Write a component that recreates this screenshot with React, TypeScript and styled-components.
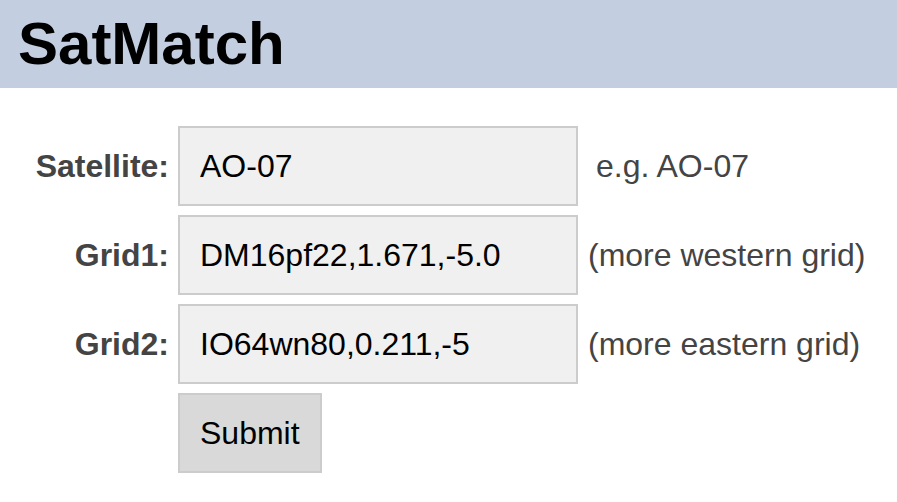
import React, {useState} from "react"
import styled, {createGlobalStyle} from "styled-components"

const GlobalStyle = createGlobalStyle`
  body {
    margin: 0;
    background: #fff;
    font-family: "Liberation Sans", Arial, sans-serif;
  }
`;

const Header = styled.header`
  height: 88px;
  background: #c3cfe0;
  display: flex;
  align-items: center;
  padding-left: 18px;

  h1 {
    margin: 0;
    font-size: 60px;
    font-weight: bold;
    color: #000;
    line-height: 1;
  }
`;

const Form = styled.form`
  display: grid;
  grid-template-columns: 169px 400px auto;
  grid-auto-rows: 80px;
  column-gap: 9px;
  row-gap: 9px;
  padding-top: 38px;
`;

const Label = styled.label`
  justify-self: end;
  align-self: center;
  font-size: 32px;
  font-weight: bold;
  color: #444;
`;

const Field = styled.input`
  box-sizing: border-box;
  width: 400px;
  height: 80px;
  padding: 0 20px;
  border: 2px solid #ccc;
  background: #f0f0f0;
  font-family: "Liberation Sans", Arial, sans-serif;
  font-size: 32px;
  color: #000;
  outline: none;
`;

const Hint = styled.span<{indent?: boolean}>`
  align-self: center;
  font-size: 32px;
  color: #444;
  white-space: nowrap;
  padding-left: ${(props) => (props.indent ? "9px" : "1px")};
`;

const SubmitButton = styled.button`
  grid-column: 2;
  justify-self: start;
  box-sizing: border-box;
  height: 80px;
  padding: 0 20px;
  border: 2px solid #ccc;
  background: #d9d9d9;
  font-family: "Liberation Sans", Arial, sans-serif;
  font-size: 32px;
  color: #000;
`;

const rows = [
  {name: "sat", label: "Satellite:", value: "AO-07", hint: "e.g. AO-07", indent: true},
  {name: "grid1", label: "Grid1:", value: "DM16pf22,1.671,-5.0", hint: "(more western grid)"},
  {name: "grid2", label: "Grid2:", value: "IO64wn80,0.211,-5", hint: "(more eastern grid)"},
];

export default function App() {
  const [values, setValues] = useState<Record<string, string>>(
    Object.fromEntries(rows.map((r) => [r.name, r.value]))
  );

  return (
    <>
      <GlobalStyle/>
      <Header>
        <h1>SatMatch</h1>
      </Header>
      <Form onSubmit={(e) => e.preventDefault()}>
        {rows.map((r) => (
          <React.Fragment key={r.name}>
            <Label htmlFor={r.name}>{r.label}</Label>
            <Field
              id={r.name}
              value={values[r.name]}
              onChange={(e) => setValues({...values, [r.name]: e.target.value})}
            />
            <Hint indent={r.indent}>{r.hint}</Hint>
          </React.Fragment>
        ))}
        <SubmitButton type="submit">Submit</SubmitButton>
      </Form>
    </>
  );
}
